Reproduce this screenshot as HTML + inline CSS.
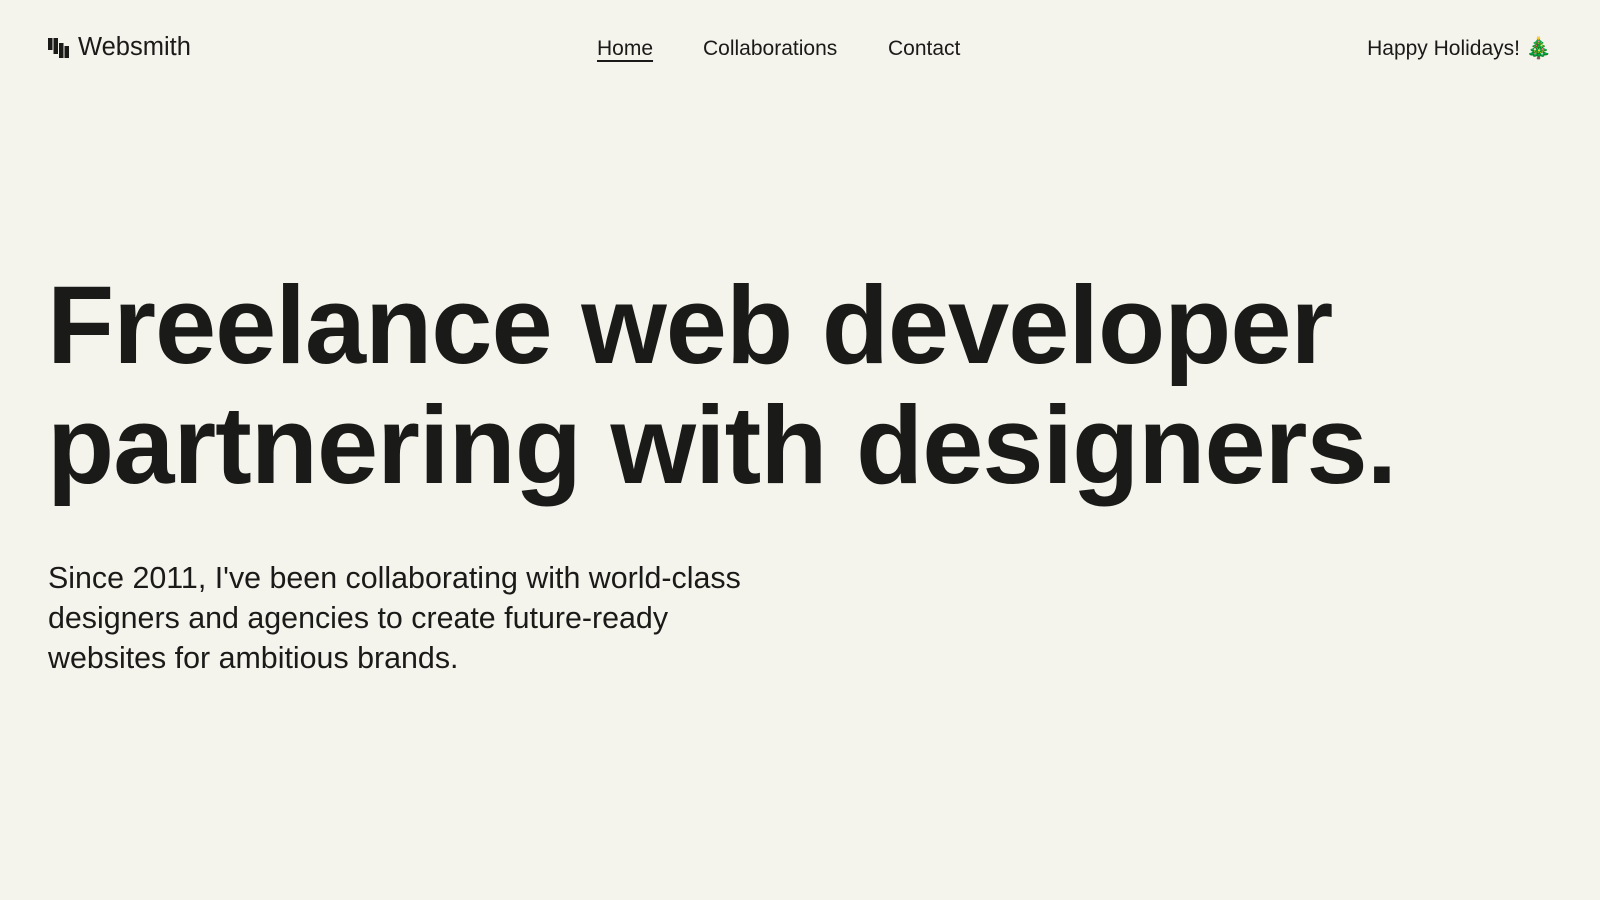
<!DOCTYPE html>
<html><head><meta charset="utf-8"><style>
body{margin:0;background:#f4f3ec;color:#1a1a18;font-family:"Liberation Sans",sans-serif;width:1600px;height:900px;overflow:hidden;position:relative}
.logo{position:absolute;left:48px;top:33px;font-size:25.5px;display:flex;align-items:center;gap:9px}
.nav{position:absolute;top:37px;font-size:21px}
h1{position:absolute;left:47px;top:266px;margin:0;font-size:110px;line-height:120px;font-weight:bold;letter-spacing:-1px;white-space:nowrap}
p{position:absolute;left:48px;top:558px;margin:0;font-size:30.4px;line-height:40px;width:730px}
</style></head><body>
<div class="logo"><svg width="21" height="20" viewBox="0 0 21 20"><rect x="0" y="0" width="4.5" height="12" fill="#1a1a18"/><rect x="5.5" y="0" width="4.5" height="16" fill="#1a1a18"/><rect x="11" y="5" width="4.5" height="15" fill="#1a1a18"/><rect x="16.5" y="8" width="4.5" height="12" fill="#1a1a18"/></svg><span>Websmith</span></div>
<div class="nav" style="left:597px;text-decoration:underline;text-underline-offset:5px">Home</div>
<div class="nav" style="left:703px">Collaborations</div>
<div class="nav" style="left:888px">Contact</div>
<div class="nav" style="right:48px">Happy Holidays! <span style="color:#3a7d2c">🎄</span></div>
<h1>Freelance web developer<br>partnering with designers.</h1>
<p>Since 2011, I've been collaborating with world-class designers and agencies to create future-ready websites for ambitious brands.</p>
</body></html>
